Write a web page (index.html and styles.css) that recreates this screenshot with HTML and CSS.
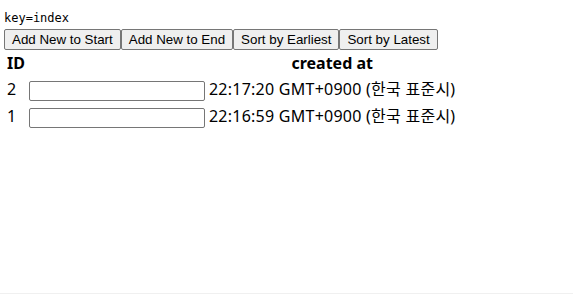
FILE: index.html
```html
<!DOCTYPE html>
<html lang="ko">
  <head>
    <meta charset="UTF-8" />
    <meta name="viewport" content="width=device-width, initial-scale=1.0" />
    <title>key demo</title>
    <link rel="stylesheet" href="styles.css">
  </head>
  <body>
    <div class="page">
      <div class="key_label">key=index</div>
      <div class="button_row"><button>Add New to Start</button><button>Add New to End</button><button>Sort by Earliest</button><button>Sort by Latest</button></div>
      <table class="todo_table">
        <thead>
          <tr>
            <th>ID</th>
            <th></th>
            <th>created at</th>
          </tr>
        </thead>
        <tbody>
          <tr>
            <td>2</td>
            <td><input type="text" /></td>
            <td>22:17:20 GMT+0900 (한국 표준시)</td>
          </tr>
          <tr>
            <td>1</td>
            <td><input type="text" /></td>
            <td>22:16:59 GMT+0900 (한국 표준시)</td>
          </tr>
        </tbody>
      </table>
    </div>
  </body>
</html>
```

FILE: styles.css
```css
html {
  height: 100%;
}
body {
  margin: 0;
  height: 100%;
  box-sizing: border-box;
  border-bottom: 1px solid #f0f0f0;
  font-family: "Noto Sans", "Noto Sans CJK KR", sans-serif;
}
.page {
  padding: 10px 4px;
}
.key_label {
  font-family: "DejaVu Sans Mono", monospace;
  font-size: 12px;
  line-height: 17px;
  margin-bottom: 2px;
}
.button_row {
  display: flex;
}
button {
  font-family: "Liberation Sans", Arial, sans-serif;
  font-size: 13.33px;
  height: 21px;
  padding: 1px 7px;
  margin: 0;
  border: 1px solid #767676;
  border-radius: 2px;
  background-color: #efefef;
  color: #000;
}
.todo_table {
  font-size: 16px;
  line-height: 23px;
}
.todo_table thead {
  line-height: 21px;
}
.todo_table th,
.todo_table td {
  padding: 1px;
}
.todo_table td:last-child {
  letter-spacing: 0.25px;
}
.todo_table input {
  width: 176px;
  height: 20px;
  box-sizing: border-box;
  border: 1px solid #767676;
  border-radius: 2px;
  margin: 0;
  vertical-align: middle;
}
```
